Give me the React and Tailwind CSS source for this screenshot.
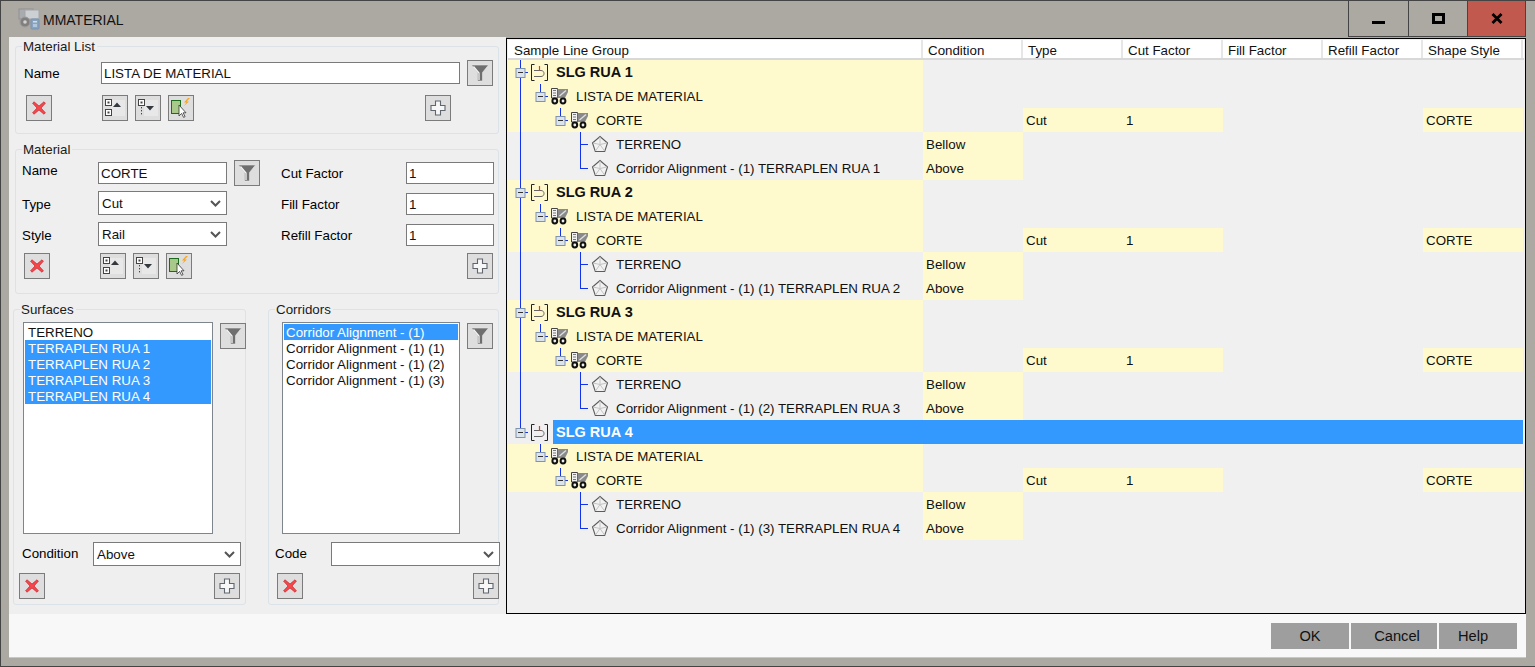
import React from "react";

const groups = [
  { name: "SLG RUA 1", corridor: "Corridor Alignment - (1) TERRAPLEN RUA 1" },
  { name: "SLG RUA 2", corridor: "Corridor Alignment - (1) (1) TERRAPLEN RUA 2" },
  { name: "SLG RUA 3", corridor: "Corridor Alignment - (1) (2) TERRAPLEN RUA 3" },
  { name: "SLG RUA 4", corridor: "Corridor Alignment - (1) (3) TERRAPLEN RUA 4", selected: true, last: true },
];

const columns = [
  { label: "Sample Line Group", w: "w-[415px] pl-[6px]" },
  { label: "Condition", w: "w-[100px] pl-[5px]" },
  { label: "Type", w: "w-[100px] pl-[5px]" },
  { label: "Cut Factor", w: "w-[100px] pl-[5px]" },
  { label: "Fill Factor", w: "w-[100px] pl-[5px]" },
  { label: "Refill Factor", w: "w-[100px] pl-[5px]" },
  { label: "Shape Style", w: "w-[100px] pl-[5px]" },
];

function FilterIcon() {
  return (
    <svg width="18" height="18" viewBox="0 0 18 18">
      <path d="M.5 1h17l-6 7.500V17h-5V8.500z" fill="#6f6f6f" stroke="#e8e8e8" strokeWidth="0.6" />
      <path d="M2.500 2.500L8 9v7" fill="none" stroke="#f4f4f4" strokeWidth="1.300" />
    </svg>
  );
}

function DeleteIcon() {
  return (
    <svg width="14" height="14" viewBox="0 0 14 14">
      <path d="M2 0.8L7 5l5-4.2 1.4 1.4L9 7l4.4 4.8-1.4 1.4L7 9l-5 4.2-1.4-1.4L5 7 .6 2.2z" fill="#f5474c" stroke="#c8242a" strokeWidth="0.7" />
    </svg>
  );
}

function AddIcon() {
  return (
    <svg width="16" height="16" viewBox="0 0 16 16">
      <path d="M5.5 1h5v4.5H15v5h-4.5V15h-5v-4.5H1v-5h4.5z" fill="#f7f7f7" stroke="#5f666e" strokeWidth="1.1" />
    </svg>
  );
}

function MoveUpIcon() {
  return (
    <svg width="20" height="20" viewBox="0 0 20 20">
      <rect x="6" y="2" width="14" height="16" fill="#e8e8e8" />
      <rect x="0.5" y="1.5" width="6" height="6" fill="#fff" stroke="#444" />
      <rect x="2.5" y="3.5" width="2" height="2" fill="#444" />
      <rect x="0.5" y="11.5" width="6" height="6" fill="#fff" stroke="#444" />
      <rect x="2.5" y="13.5" width="2" height="2" fill="#444" />
      <path d="M8 9l4-4.5 4 4.5z" fill="#33393f" />
    </svg>
  );
}

function MoveDownIcon() {
  return (
    <svg width="20" height="20" viewBox="0 0 20 20">
      <rect x="6" y="2" width="14" height="16" fill="#e8e8e8" />
      <rect x="0.5" y="1.5" width="6" height="6" fill="#fff" stroke="#444" />
      <rect x="2.5" y="3.5" width="2" height="2" fill="#444" />
      <path d="M3.5 9v9" stroke="#444" strokeDasharray="1.4 1.6" />
      <path d="M8 8h8l-4 4.5z" fill="#33393f" />
    </svg>
  );
}

function WizardIcon() {
  return (
    <svg width="20" height="20" viewBox="0 0 20 20">
      <rect x="0.5" y="2.5" width="9" height="13" fill="#a9c98a" stroke="#1d6b1d" />
      <path d="M8 7v11l2.6-2.6 2 4 1.5-.8-2-3.8H15z" fill="#fff" stroke="#333" strokeWidth="0.8" />
      <path d="M17 0l-4 4.5h2.4L13 8l5-4.6h-2.5L19 0z" fill="#f5a623" />
    </svg>
  );
}

function Chevron() {
  return (
    <svg width="11" height="7" viewBox="0 0 11 7">
      <path d="M1 1l4.5 4.5L10 1" fill="none" stroke="#555" strokeWidth="2" />
    </svg>
  );
}

function IconButton({ className = "", children }) {
  return (
    <button className={`flex h-[26px] w-[26px] shrink-0 items-center justify-center border border-[#7b7b7b] bg-[#dedede] ${className}`}>
      {children}
    </button>
  );
}

function TextBox({ value, className = "" }) {
  return (
    <div className={`flex h-[22px] shrink-0 items-center border border-[#7a7a7a] bg-white pl-[2px] pt-[2px] text-[#111] ${className}`}>
      {value}
    </div>
  );
}

function Combo({ value, className = "" }) {
  return (
    <div className={`flex h-6 shrink-0 items-center justify-between border border-[#7a7a7a] bg-white pl-[3px] pr-[5px] text-[#111] ${className}`}>
      <span className="pt-[2px]">{value}</span>
      <Chevron />
    </div>
  );
}

function Group({ title, className = "", children }) {
  return (
    <div className={`relative rounded-[3px] border border-[#dbe2e8] ${className}`}>
      <span className="absolute -top-[8px] left-[6px] bg-[#efefef] pl-px pr-[2px] leading-4 text-[#1a1a1a]">{title}</span>
      {children}
    </div>
  );
}

function ListBox({ items, selected, className = "", indent = "pl-[3px]" }) {
  return (
    <div className={`h-[212px] shrink-0 border border-[#7f858c] bg-white p-px ${className}`}>
      {items.map((item) => (
        <div
          key={item}
          className={`h-4 pt-px leading-4 ${indent} ${selected.includes(item) ? "bg-[#3399ff] text-white" : "text-[#111]"}`}
        >
          {item}
        </div>
      ))}
    </div>
  );
}

function ToolRow() {
  return (
    <>
      <IconButton className="ml-[50px]"><MoveUpIcon /></IconButton>
      <IconButton className="ml-[7px]"><MoveDownIcon /></IconButton>
      <IconButton className="ml-[7px]"><WizardIcon /></IconButton>
    </>
  );
}

function LeftPanel() {
  return (
    <div className="w-[497px] shrink-0 bg-[#efefef] text-[13.33px]">
      <Group title="Material List" className="ml-[6px] mt-[9px] h-[88px] w-[484px]">
        <div className="mt-[13px] flex items-center pl-2">
          <span className="mt-[2px] w-[77px]">Name</span>
          <TextBox value="LISTA DE MATERIAL" className="w-[359px]" />
          <IconButton className="ml-[7px]"><FilterIcon /></IconButton>
        </div>
        <div className="mt-[9px] flex pl-[10px]">
          <IconButton><DeleteIcon /></IconButton>
          <ToolRow />
          <IconButton className="ml-[231px]"><AddIcon /></IconButton>
        </div>
      </Group>

      <Group title="Material" className="ml-[6px] mt-[15px] h-[145px] w-[484px]">
        <div className="mt-[10px] flex h-[26px] items-center pl-[6px]">
          <span className="-mt-[4px] w-[76px]">Name</span>
          <TextBox value="CORTE" className="w-[129px]" />
          <IconButton className="ml-[7px]"><FilterIcon /></IconButton>
          <span className="ml-[21px] mt-[2px] w-[125px]">Cut Factor</span>
          <TextBox value="1" className="w-[88px]" />
        </div>
        <div className="mt-[5px] flex h-6 items-center pl-[6px]">
          <span className="mt-[4px] w-[76px]">Type</span>
          <Combo value="Cut" className="w-[129px]" />
          <span className="ml-[54px] mt-[4px] w-[125px]">Fill Factor</span>
          <TextBox value="1" className="mt-[2px] w-[88px]" />
        </div>
        <div className="mt-[7px] flex h-6 items-center pl-[6px]">
          <span className="mt-[4px] w-[76px]">Style</span>
          <Combo value="Rail" className="w-[129px]" />
          <span className="ml-[54px] mt-[4px] w-[125px]">Refill Factor</span>
          <TextBox value="1" className="mt-[2px] w-[88px]" />
        </div>
        <div className="mt-[7px] flex pl-2">
          <IconButton><DeleteIcon /></IconButton>
          <ToolRow />
          <IconButton className="ml-[275px]"><AddIcon /></IconButton>
        </div>
      </Group>

      <div className="ml-1 mt-[15px] flex">
        <Group title="Surfaces" className="h-[296px] w-[233px]">
          <div className="mt-3 flex pl-[9px]">
            <ListBox
              className="w-[190px]"
              items={["TERRENO", "TERRAPLEN RUA 1", "TERRAPLEN RUA 2", "TERRAPLEN RUA 3", "TERRAPLEN RUA 4"]}
              selected={["TERRAPLEN RUA 1", "TERRAPLEN RUA 2", "TERRAPLEN RUA 3", "TERRAPLEN RUA 4"]}
            />
            <IconButton className="ml-[7px] mt-px"><FilterIcon /></IconButton>
          </div>
          <div className="mt-2 flex h-6 items-center pl-2">
            <span className="w-[71px]">Condition</span>
            <Combo value="Above" className="w-[148px]" />
          </div>
          <div className="mt-[7px] flex pl-[5px]">
            <IconButton><DeleteIcon /></IconButton>
            <IconButton className="ml-[169px]"><AddIcon /></IconButton>
          </div>
        </Group>
        <Group title="Corridors" className="ml-[22px] h-[296px] w-[231px]">
          <div className="mt-3 flex pl-[13px]">
            <ListBox
              className="w-[178px]"
              indent="pl-[2px]"
              items={["Corridor Alignment - (1)", "Corridor Alignment - (1) (1)", "Corridor Alignment - (1) (2)", "Corridor Alignment - (1) (3)"]}
              selected={["Corridor Alignment - (1)"]}
            />
            <IconButton className="ml-[7px] mt-px"><FilterIcon /></IconButton>
          </div>
          <div className="mt-2 flex h-6 items-center pl-[6px]">
            <span className="w-[56px] shrink-0">Code</span>
            <Combo value="" className="w-[169px]" />
          </div>
          <div className="mt-[7px] flex pl-2">
            <IconButton><DeleteIcon /></IconButton>
            <IconButton className="ml-[170px]"><AddIcon /></IconButton>
          </div>
        </Group>
      </div>
    </div>
  );
}

function Expander({ x }) {
  return (
    <g>
      <rect x={x} y="8.5" width="9" height="9" fill="#dbe3ec" stroke="#7f93ad" />
      <path d={`M${x + 2} 12.5h5`} stroke="#333" />
    </g>
  );
}

function BracketIcon() {
  return (
    <g transform="translate(23 4)">
      <path d="M3.5 .5H.5v16h3M13.5 .5h3v16h-3" fill="none" stroke="#222" />
      <path d="M3 6.500h7c2 0 3 1.500 3 3s-1 3-3 3H3" fill="none" stroke="#666" />
      <path d="M8.500 2v5" stroke="#e5392f" strokeWidth="1.200" />
    </g>
  );
}

function TruckIcon({ x }) {
  return (
    <g transform={`translate(${x} 4)`}>
      <path d="M.5 .5h6v9.500h-6z" fill="#f2f2f2" stroke="#444" />
      <path d="M2 2.500h3M2 5h3M2 7.500h3" stroke="#777" />
      <path d="M6.500 1H17v3l-3 6H6.500z" fill="#8a8a8a" />
      <path d="M8.500 8L15 2.500" stroke="#e0e0e0" strokeWidth="1.300" />
      <circle cx="3.800" cy="13" r="2.400" fill="#eee" stroke="#111" strokeWidth="2" />
      <circle cx="12" cy="13" r="2.400" fill="#eee" stroke="#111" strokeWidth="2" />
    </g>
  );
}

function SurfaceIcon() {
  return (
    <g transform="translate(84 4)">
      <path d="M8 .5l7.500 6.500-2.800 8.500H3.300L.5 7z" fill="#f2f2f2" stroke="#5c5c5c" strokeWidth="1.100" />
      <path d="M8 1v7.500M1 7L8 8.500 15 7M3.500 15L8 8.500l4.500 6.500" fill="none" stroke="#c4c4c4" />
    </g>
  );
}

// Tree lines and icons for the first column of one row
function Gutter({ level, trunk, trunkEnd, firstLeaf }) {
  const width = 45 + level * 20;
  return (
    <svg width={width} height="24" className="shrink-0">
      {trunk && <path d={`M12.500 0V${trunkEnd ? 12 : 24}`} stroke="#1133ee" />}
      {level === 0 && (
        <>
          <path d="M17 12.500h3" stroke="#1133ee" />
          <Expander x={8} />
          <BracketIcon />
        </>
      )}
      {level === 1 && (
        <>
          <path d="M32.500 0v8M37 12.500h3" stroke="#1133ee" />
          <Expander x={28} />
          <TruckIcon x={43} />
        </>
      )}
      {level === 2 && (
        <>
          <path d="M52.500 0v8M57 12.500h3" stroke="#1133ee" />
          <Expander x={48} />
          <TruckIcon x={63} />
        </>
      )}
      {level === 3 && (
        <>
          <path d={`M72.500 0V${firstLeaf ? 24 : 12.5}M72 12.500h8`} stroke="#1133ee" />
          <SurfaceIcon />
        </>
      )}
    </svg>
  );
}

function Cell({ value, yellow }) {
  return (
    <div className={`flex w-[100px] shrink-0 items-center pl-[3px] pt-[2px] ${yellow ? "bg-[#fffacd]" : ""}`}>
      {value}
    </div>
  );
}

function TreeRow({ level, label, group, firstLeaf, condition, material }) {
  const selected = level === 0 && group.selected;
  const trunk = !group.last || level === 0;
  const yellowName = level < 3 && !selected;
  return (
    <div className={`flex h-6 ${selected ? "text-white" : "text-[#111]"}`}>
      <div className={`flex w-[415px] shrink-0 ${yellowName ? "bg-[#fffacd]" : ""}`}>
        <Gutter level={level} trunk={trunk} trunkEnd={group.last && level === 0} firstLeaf={firstLeaf} />
        <span
          className={`flex flex-1 items-center pl-[3px] pt-[2px] ${level === 0 ? "text-[14.5px] font-bold" : ""} ${selected ? "bg-[#3399ff]" : ""}`}
        >
          {label}
        </span>
      </div>
      {selected ? (
        <div className="w-[600px] shrink-0 bg-[#3399ff]" />
      ) : (
        <>
          <Cell value={condition} yellow={!!condition} />
          <Cell value={material ? "Cut" : ""} yellow={material} />
          <Cell value={material ? "1" : ""} yellow={material} />
          <Cell />
          <Cell />
          <Cell value={material ? "CORTE" : ""} yellow={material} />
        </>
      )}
    </div>
  );
}

function TreePanel() {
  return (
    <div className="mt-px h-[576px] w-[1020px] shrink-0 border border-black bg-[#f0f0f0] p-px text-[13.33px]">
      <div className="flex h-[20px] border-b-2 border-[#d8d8d8] bg-white">
        {columns.map((col) => (
          <div key={col.label} className={`${col.w} flex shrink-0 items-center border-r-2 border-[#e6e6e6] pt-[4px] text-[#111]`}>
            {col.label}
          </div>
        ))}
      </div>
      {groups.map((group) => (
        <div key={group.name}>
          <TreeRow level={0} label={group.name} group={group} />
          <TreeRow level={1} label="LISTA DE MATERIAL" group={group} />
          <TreeRow level={2} label="CORTE" group={group} material />
          <TreeRow level={3} label="TERRENO" group={group} firstLeaf condition="Bellow" />
          <TreeRow level={3} label={group.corridor} group={group} condition="Above" />
        </div>
      ))}
    </div>
  );
}

function AppIcon() {
  return (
    <svg width="22" height="22" viewBox="0 0 22 22" className="ml-[17px] shrink-0 opacity-80">
      <rect x="1" y="1" width="14" height="10" fill="#a9adb3" stroke="#8a8d92" />
      <rect x="7" y="2" width="14" height="9" fill="#d5dae0" stroke="#a2a6ab" />
      <circle cx="7" cy="14" r="5" fill="#777" stroke="#9b9b9b" />
      <circle cx="7" cy="14" r="1.800" fill="#ddd" />
      <rect x="13" y="11" width="8" height="10" rx="1" fill="#7fa3c8" stroke="#6a8fb5" />
      <rect x="15" y="13" width="4" height="1.500" fill="#dcebf8" />
      <rect x="15" y="16" width="4" height="3" fill="#b5cfe8" />
    </svg>
  );
}

export default function App() {
  return (
    <div className="flex h-[667px] w-[1535px] flex-col overflow-hidden border-y border-l border-[#444] bg-[#aca8a2] font-['Liberation_Sans',Arial,sans-serif]">
      <div className="flex h-9 shrink-0 items-center">
        <AppIcon />
        <span className="ml-[3px] pt-[2px] text-sm text-[#111]">MMATERIAL</span>
        <div className="ml-auto mr-[9px] flex h-full">
          <button className="flex w-[61px] items-center justify-center border-x border-b border-[#444] pt-[8px]">
            <span className="h-[3px] w-[13px] bg-black" />
          </button>
          <button className="flex w-[59px] items-center justify-center border-r border-b border-[#444]">
            <span className="h-[11px] w-[13px] border-[3px] border-black" />
          </button>
          <button className="flex w-[58px] items-center justify-center border-r border-b border-[#444] bg-[#c1594f]">
            <svg width="12" height="11" viewBox="0 0 12 11">
              <path d="M1.500 1l9 9M10.500 1l-9 9" stroke="#000" strokeWidth="2.800" />
            </svg>
          </button>
        </div>
      </div>

      <div className="ml-2 flex h-[577px] w-[1517px] shrink-0">
        <LeftPanel />
        <TreePanel />
      </div>

      <div className="ml-2 flex h-[44px] w-[1517px] shrink-0 justify-end gap-[2px] border-b border-[#c4c9ce] bg-[#f8f8f8] pr-[9px] pt-[9px] text-[14.67px] text-[#111]">
        <button className="h-[26px] w-[78px] bg-[#9e9e9e]">OK</button>
        <button className="h-[26px] w-[86px] bg-[#9e9e9e] pl-[6px]">Cancel</button>
        <button className="h-[26px] w-[78px] bg-[#9e9e9e] pr-[10px]">Help</button>
      </div>
    </div>
  );
}
